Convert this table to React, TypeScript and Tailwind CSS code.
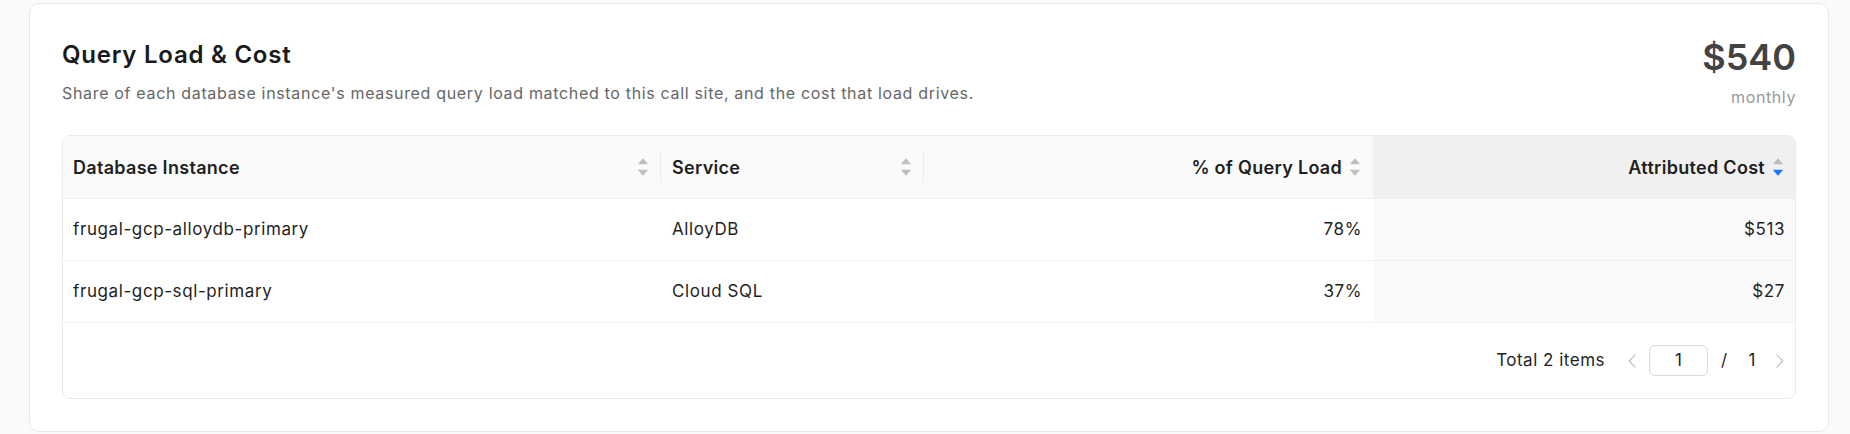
import React from "react";

type Row = {
  instance: string;
  service: string;
  load: string;
  cost: string;
};

const rows: Row[] = [
  { instance: "frugal-gcp-alloydb-primary", service: "AlloyDB", load: "78%", cost: "$513" },
  { instance: "frugal-gcp-sql-primary", service: "Cloud SQL", load: "37%", cost: "$27" },
];

const SortIcon: React.FC<{ active?: "up" | "down" }> = ({ active }) => (
  <svg width="10" height="20" viewBox="0 0 10 20" className="shrink-0">
    <path d="M5 1.2 L9.6 6.6 Q10 7.2 9.3 7.2 L0.7 7.2 Q0 7.2 0.4 6.6 Z" fill={active === "up" ? "#1677ff" : "#bfbfbf"} />
    <path d="M5 18.8 L9.6 13.4 Q10 12.8 9.3 12.8 L0.7 12.8 Q0 12.8 0.4 13.4 Z" fill={active === "down" ? "#1677ff" : "#bfbfbf"} />
  </svg>
);

const Chevron: React.FC<{ dir: "left" | "right" }> = ({ dir }) => (
  <svg width="8" height="14" viewBox="0 0 8 14" fill="none">
    <path
      d={dir === "left" ? "M7 1 L1.2 7 L7 13" : "M1 1 L6.8 7 L1 13"}
      stroke="#c4c4c4"
      strokeWidth="1.2"
      strokeLinecap="round"
      strokeLinejoin="round"
    />
  </svg>
);

const cols = "grid grid-cols-[598px_263px_449px_1fr]";

export default function App() {
  return (
    <div className="min-h-screen bg-[#fafafa] pl-[29px] pr-[21px] pt-[3px] font-['Inter','Liberation_Sans',sans-serif] text-[#1f1f1f]">
      <div className="rounded-[10px] border border-[#e8e8e8] bg-white px-[32px] pt-[31px] pb-[32px]">
        <div className="flex items-start justify-between">
          <div className="pt-[6px]">
            <h2 className="text-[24px] leading-[28px] font-semibold tracking-[0.75px] text-[#1a1a1a]">Query Load &amp; Cost</h2>
            <p className="mt-[14px] text-[16px] leading-[20px] tracking-[0.67px] text-[#666666]">
              Share of each database instance's measured query load matched to this call site, and the cost that load drives.
            </p>
          </div>
          <div className="text-right">
            <div className="text-[36px] leading-[44px] font-semibold text-[#424242]">$540</div>
            <div className="mt-[8px] text-[16px] leading-[20px] tracking-[0.6px] text-[#999999]">monthly</div>
          </div>
        </div>

        <div className="mt-[28px] overflow-hidden rounded-[8px] border border-[#ebebeb]">
          <div className={`${cols} h-[63px] border-b border-[#f0f0f0] bg-[#fafafa] text-[18px] font-semibold tracking-[0.3px]`}>
            <div className="flex items-center justify-between pl-[10px] pr-[13px] relative">
              <span>Database Instance</span>
              <SortIcon />
              <span className="absolute right-0 top-[16px] h-[30px] w-px bg-[#ececec]" />
            </div>
            <div className="flex items-center justify-between pl-[11px] pr-[13px] relative">
              <span>Service</span>
              <SortIcon />
              <span className="absolute right-0 top-[16px] h-[30px] w-px bg-[#ececec]" />
            </div>
            <div className="flex items-center justify-end gap-[8px] pr-[13px]">
              <span>% of Query Load</span>
              <SortIcon />
            </div>
            <div className="flex items-center justify-end gap-[8px] bg-[#f0f0f0] pr-[12px]">
              <span>Attributed Cost</span>
              <SortIcon active="down" />
            </div>
          </div>

          {rows.map((r) => (
            <div key={r.instance} className={`${cols} h-[62px] border-b border-[#f0f0f0] text-[17px] tracking-[0.6px]`}>
              <div className="flex items-center pl-[10px]">{r.instance}</div>
              <div className="flex items-center pl-[11px]">{r.service}</div>
              <div className="flex items-center justify-end pr-[11px]">{r.load}</div>
              <div className="flex items-center justify-end bg-[#fafafa] pr-[10px]">{r.cost}</div>
            </div>
          ))}

          <div className="flex h-[75px] items-center justify-end text-[17px]">
            <span className="tracking-[0.5px]">Total 2 items</span>
            <button className="ml-[18px] flex w-[18px] justify-center">
              <Chevron dir="left" />
            </button>
            <div className="ml-[8px] flex h-[31px] w-[59px] items-center justify-center rounded-[6px] border border-[#d9d9d9]">
              1
            </div>
            <span className="w-[32px] text-center">/</span>
            <span className="w-[24px] text-center">1</span>
            <button className="flex w-[31px] justify-center">
              <Chevron dir="right" />
            </button>
          </div>
        </div>
      </div>
    </div>
  );
}
